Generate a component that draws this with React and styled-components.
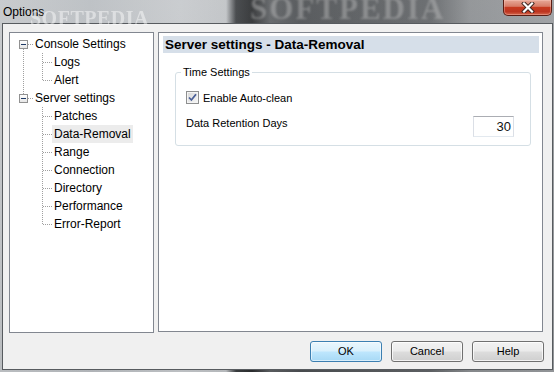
import React from "react";
import styled, { createGlobalStyle } from "styled-components";

const GlobalStyle = createGlobalStyle`
  html, body {
    margin: 0;
    padding: 0;
    overflow: hidden;
    background: #9a9da0;
  }
`;

const Screen = styled.div`
  position: relative;
  width: 554px;
  height: 372px;
  overflow: hidden;
  display: flex;
  flex-direction: column;
  font-family: "Liberation Sans", Arial, sans-serif;
  color: #000;
  background:
    linear-gradient(180deg, rgba(255, 255, 255, 0.08) 0%, rgba(0, 0, 0, 0.05) 100%),
    linear-gradient(
      90deg,
      #c4c7ca 0px,
      #b9bdc1 90px,
      #c6c9cc 180px,
      #bfc2c5 226px,
      #3c3f42 236px,
      #2b2d2f 252px,
      #5d6063 270px,
      #4c4f52 300px,
      #56595c 360px,
      #616467 430px,
      #8c8f92 470px,
      #999c9f 554px
    );
`;

const Watermark = styled.div`
  position: absolute;
  left: ${(p) => p.$x}px;
  top: ${(p) => p.$y}px;
  font-family: "Liberation Serif", "Times New Roman", serif;
  font-weight: bold;
  font-size: ${(p) => p.$size}px;
  letter-spacing: ${(p) => p.$spacing}px;
  color: ${(p) => p.$color};
  filter: blur(${(p) => p.$blur}px);
  pointer-events: none;
  z-index: 5;
`;

const TitleBar = styled.div`
  height: 23px;
  flex: none;
  display: flex;
  align-items: flex-start;
`;

const Caption = styled.div`
  padding: 5px 0 0 3px;
  font-size: 12px;
  line-height: 14px;
`;

const CloseButton = styled.div`
  margin-left: auto;
  margin-right: 2px;
  width: 47px;
  height: 15px;
  border: 1px solid #5a1d13;
  border-top: none;
  border-radius: 0 0 5px 5px;
  background: linear-gradient(
    180deg,
    #e7a998 0%,
    #d77c68 42%,
    #c63a20 50%,
    #bd3520 78%,
    #d5684d 100%
  );
  box-shadow: inset 0 0 0 1px rgba(255, 210, 200, 0.35);
  display: flex;
  align-items: center;
  justify-content: center;
`;

const Client = styled.div`
  flex: 1;
  margin: 0 1px 2px 2px;
  border: 1px solid #575b5f;
  background: #f0f0f0;
  display: flex;
  flex-direction: column;
  padding: 8px 9px 7px 6px;
`;

const Body = styled.div`
  display: flex;
  align-items: flex-start;
  gap: 4px;
`;

const TreePanel = styled.div`
  width: 145px;
  height: 301px;
  flex: none;
  box-sizing: border-box;
  border: 1px solid #828790;
  background: #fff;
  padding-top: 2px;
`;

const Row = styled.div`
  display: flex;
  align-items: center;
  height: 18px;
`;

const dots = "repeating-linear-gradient(to bottom, #a0a0a0 0 1px, transparent 1px 2px)";
const hdots = "repeating-linear-gradient(to right, #a0a0a0 0 1px, transparent 1px 2px)";

const lineTop = { full: 0, half: 0, "top-box": 0, "bottom-box": 14, none: 0 };
const lineHeight = { full: 18, half: 9, "top-box": 5, "bottom-box": 4, none: 0 };

const Guide = styled.div`
  position: relative;
  width: 19px;
  height: 18px;
  flex: none;

  &::before {
    content: "";
    position: absolute;
    left: 13px;
    width: 1px;
    background: ${dots};
    top: ${(p) => lineTop[p.$v]}px;
    height: ${(p) => lineHeight[p.$v]}px;
  }

  &::after {
    content: "";
    position: absolute;
    top: 9px;
    height: 1px;
    background: ${hdots};
    left: ${(p) => (p.$box ? 18 : 14)}px;
    width: ${(p) => p.$h || 0}px;
  }
`;

const Expander = styled.div`
  position: absolute;
  left: 9px;
  top: 5px;
  width: 7px;
  height: 7px;
  border: 1px solid #919191;
  background: linear-gradient(180deg, #ffffff 0%, #e6e6e6 100%);
  display: flex;
  align-items: center;
  justify-content: center;

  &::before {
    content: "";
    width: 5px;
    height: 1px;
    background: #1f3a66;
  }
`;

const Label = styled.div`
  margin-left: 4px;
  padding: 0 2px;
  height: 18px;
  line-height: 18px;
  font-size: 12px;
  white-space: nowrap;
  background: ${(p) => (p.$selected ? "#ececec" : "transparent")};
`;

const SettingsPanel = styled.div`
  flex: 1;
  height: 300px;
  box-sizing: border-box;
  border: 1px solid #828790;
  background: #fff;
  padding: 3px 3px 0 4px;
  display: flex;
  flex-direction: column;
`;

const Heading = styled.div`
  height: 17px;
  line-height: 17px;
  padding-left: 2px;
  background: #d6dfe9;
  font-size: 13.5px;
  font-weight: bold;
  white-space: nowrap;
`;

const Group = styled.fieldset`
  margin: 13px 8px 0 12px;
  padding: 0 16px 8px 5px;
  border: 1px solid #d5dfe5;
  border-radius: 3px;
  min-width: 0;
`;

const Legend = styled.legend`
  padding: 0 2px;
  font-size: 11px;
  line-height: 13px;
`;

const GroupBody = styled.div`
  padding-left: 5px;
  display: flex;
  flex-direction: column;
  gap: 12px;
  padding-top: 12px;
`;

const CheckRow = styled.label`
  display: flex;
  align-items: center;
  gap: 4px;
  height: 13px;
  font-size: 11px;
`;

const CheckBox = styled.span`
  width: 13px;
  height: 13px;
  box-sizing: border-box;
  border: 1px solid #8e8f8f;
  background: linear-gradient(135deg, #d8d8d8 0%, #f7f7f7 100%);
  box-shadow: inset 0 0 0 1px #f4f4f4;
  display: flex;
  align-items: center;
  justify-content: center;
`;

const FieldRow = styled.div`
  display: flex;
  align-items: flex-start;
  font-size: 11px;
`;

const FieldLabel = styled.span`
  padding-top: 1px;
  line-height: 13px;
`;

const NumberBox = styled.div`
  margin-left: auto;
  width: 41px;
  height: 21px;
  box-sizing: border-box;
  border: 1px solid #dbdfe6;
  border-top-color: #abadb3;
  border-bottom-color: #e3e9ef;
  background: #fff;
  font-size: 13px;
  line-height: 19px;
  text-align: right;
  padding-right: 2px;
  color: #101010;
`;

const Footer = styled.div`
  margin-top: 8px;
  margin-right: -1px;
  display: flex;
  justify-content: flex-end;
  gap: 9px;
`;

const Button = styled.div`
  width: 72px;
  height: 21px;
  box-sizing: border-box;
  border: 1px solid ${(p) => (p.$default ? "#3c7fb1" : "#707070")};
  border-radius: 3px;
  background: ${(p) =>
    p.$default
      ? "linear-gradient(180deg, #eaf6fd 0%, #d9f0fc 48%, #bee6fd 52%, #a7d9f5 100%)"
      : "linear-gradient(180deg, #f2f2f2 0%, #ebebeb 48%, #dddddd 52%, #cfcfcf 100%)"};
  box-shadow: inset 0 0 0 1px ${(p) => (p.$default ? "rgba(255,255,255,0.55)" : "rgba(255,255,255,0.75)")};
  font-size: 11px;
  line-height: 19px;
  text-align: center;
`;

const tree = [
  {
    label: "Console Settings",
    children: ["Logs", "Alert"],
  },
  {
    label: "Server settings",
    children: [
      "Patches",
      "Data-Removal",
      "Range",
      "Connection",
      "Directory",
      "Performance",
      "Error-Report",
    ],
  },
];

function Tree() {
  const rows = [];
  tree.forEach((node, i) => {
    const hasNext = i < tree.length - 1;
    rows.push(
      <Row key={node.label}>
        <Guide $box $h={6} $v={hasNext ? "bottom-box" : i === 0 ? "none" : "top-box"}>
          <Expander />
        </Guide>
        <Label>{node.label}</Label>
      </Row>
    );
    node.children.forEach((child, j) => {
      const last = j === node.children.length - 1;
      rows.push(
        <Row key={child}>
          <Guide $v={hasNext ? "full" : "none"} />
          <Guide $v={last ? "half" : "full"} $h={10} />
          <Label $selected={child === "Data-Removal"}>{child}</Label>
        </Row>
      );
    });
  });
  return <TreePanel>{rows}</TreePanel>;
}

export default function App() {
  return (
    <Screen>
      <GlobalStyle />
      <Watermark $x={250} $y={-9} $size={31} $spacing={2} $color="rgba(205,205,205,0.38)" $blur={1}>
        SOFTPEDIA
      </Watermark>
      <Watermark $x={30} $y={7} $size={20} $spacing={0.5} $color="rgba(255,255,255,0.45)" $blur={0.4}>
        SOFTPEDIA
      </Watermark>
      <TitleBar>
        <Caption>Options</Caption>
        <CloseButton>
          <svg width="16" height="11" viewBox="0 0 16 11">
            <path d="M4 1.5 L12 9.5 M12 1.5 L4 9.5" stroke="#3b2420" strokeWidth="4" strokeLinecap="square" />
            <path d="M4 1.5 L12 9.5 M12 1.5 L4 9.5" stroke="#ffffff" strokeWidth="2.2" strokeLinecap="square" />
          </svg>
        </CloseButton>
      </TitleBar>
      <Client>
        <Body>
          <Tree />
          <SettingsPanel>
            <Heading>Server settings - Data-Removal</Heading>
            <Group>
              <Legend>Time Settings</Legend>
              <GroupBody>
                <CheckRow>
                  <CheckBox>
                    <svg width="9" height="9" viewBox="0 0 9 9">
                      <path d="M1 4.5 L3.4 7 L8 1.2" fill="none" stroke="#4a5f97" strokeWidth="1.8" />
                    </svg>
                  </CheckBox>
                  Enable Auto-clean
                </CheckRow>
                <FieldRow>
                  <FieldLabel>Data Retention Days</FieldLabel>
                  <NumberBox>30</NumberBox>
                </FieldRow>
              </GroupBody>
            </Group>
          </SettingsPanel>
        </Body>
        <Footer>
          <Button $default>OK</Button>
          <Button>Cancel</Button>
          <Button>Help</Button>
        </Footer>
      </Client>
    </Screen>
  );
}
